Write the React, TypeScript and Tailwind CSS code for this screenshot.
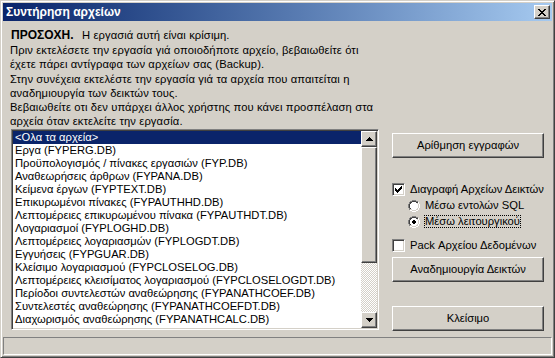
import React from "react";

const files = [
  "<Ολα τα αρχεία>",
  "Εργα (FYPERG.DB)",
  "Προϋπολογισμός / πίνακες εργασιών (FYP.DB)",
  "Αναθεωρήσεις άρθρων (FYPANA.DB)",
  "Κείμενα έργων (FYPTEXT.DB)",
  "Επικυρωμένοι πίνακες (FYPAUTHHD.DB)",
  "Λεπτομέρειες επικυρωμένου πίνακα (FYPAUTHDT.DB)",
  "Λογαριασμοί (FYPLOGHD.DB)",
  "Λεπτομέρειες λογαριασμών (FYPLOGDT.DB)",
  "Εγγυήσεις (FYPGUAR.DB)",
  "Κλείσιμο λογαριασμού (FYPCLOSELOG.DB)",
  "Λεπτομέρειες κλεισίματος λογαριασμού (FYPCLOSELOGDT.DB)",
  "Περίοδοι συντελεστών αναθεώρησης (FYPANATHCOEF.DB)",
  "Συντελεστές αναθεώρησης (FYPANATHCOEFDT.DB)",
  "Διαχωρισμός αναθεώρησης (FYPANATHCALC.DB)",
];

const notes = [
  "Πριν εκτελέσετε την εργασία γιά οποιοδήποτε αρχείο, βεβαιωθείτε ότι",
  "έχετε πάρει αντίγραφα των αρχείων σας (Backup).",
  "Στην συνέχεια εκτελέστε την εργασία γιά τα αρχεία που απαιτείται η",
  "αναδημιουργία των δεικτών τους.",
  "Βεβαιωθείτε οτι δεν υπάρχει άλλος χρήστης που κάνει προσπέλαση στα",
  "αρχεία όταν εκτελείτε την εργασία.",
];

const raised =
  "border border-t-white border-l-white border-b-[#404040] border-r-[#404040] shadow-[inset_-1px_-1px_#808080] bg-[#d4d0c8]";

const Button = ({ label }: { label: string }) => (
  <div className={`${raised} w-[152px] h-[25px] flex items-center justify-center text-black`}>
    {label}
  </div>
);

const CheckBox = ({ checked }: { checked?: boolean }) => (
  <div className="w-[13px] h-[13px] bg-white border border-t-[#808080] border-l-[#808080] border-b-white border-r-white shadow-[inset_1px_1px_#404040,inset_-1px_-1px_#d4d0c8] flex items-center justify-center">
    {checked && (
      <svg width="7" height="7" viewBox="0 0 7 7">
        <path d="M0 2h1v1h1v1h1v-1h1v-1h1v-1h1v-1h1v3h-1v1h-1v1h-1v1h-1v1h-1v-1h-1v-1h-1z" fill="#000" />
      </svg>
    )}
  </div>
);

const Radio = ({ checked }: { checked?: boolean }) => (
  <svg width="12" height="12" viewBox="0 0 12 12" className="shrink-0">
    <path d="M4 0h4v1h2v1h1v2h1v4h-1v2h-1v1h-2v1h-4v-1h-2v-1h-1v-2h-1v-4h1v-2h1v-1h2z" fill="#ffffff" />
    <path d="M4 0h4v1h-4zM2 1h2v1h-2zM8 1h2v1h-2zM1 2h1v2h-1zM0 4h1v4h-1zM1 8h1v2h-1z" fill="#808080" />
    <path d="M4 1h4v1h-4zM2 2h2v1h-2zM8 2h2v1h-2zM2 3h1v1h-1zM1 4h1v4h-1zM2 8h1v1h-1z" fill="#404040" />
    <path d="M10 2h1v2h-1zM11 4h1v4h-1zM10 8h1v2h-1zM8 10h2v1h-2zM4 11h4v1h-4zM2 10h2v1h-2z" fill="#ffffff" />
    <path d="M9 3h1v1h-1zM10 4h1v4h-1zM9 8h1v1h-1zM8 9h2v1h-2zM4 10h4v1h-4zM2 9h2v1h-2z" fill="#d4d0c8" />
    {checked && <path d="M5 4h2v1h1v2h-1v1h-2v-1h-1v-2h1z" fill="#000" />}
  </svg>
);

const Arrow = ({ up }: { up?: boolean }) => (
  <svg width="7" height="4" viewBox="0 0 7 4">
    {up ? (
      <path d="M3 0h1v1h1v1h1v1h1v1h-7v-1h1v-1h1v-1h1z" fill="#000" />
    ) : (
      <path d="M0 0h7v1h-1v1h-1v1h-1v1h-1v-1h-1v-1h-1v-1h-1z" fill="#000" />
    )}
  </svg>
);

export default function App() {
  return (
    <div
      className="w-[555px] h-[358px] bg-[#d4d0c8] flex flex-col p-[2px] border border-t-[#d4d0c8] border-l-[#d4d0c8] border-b-[#404040] border-r-[#404040] shadow-[inset_1px_1px_#ffffff,inset_-1px_-1px_#808080] text-[11.2px] text-black overflow-hidden"
      style={{ fontFamily: '"Liberation Sans", Arial, sans-serif' }}
    >
      {/* title bar */}
      <div className="h-[18px] shrink-0 flex items-center justify-between bg-linear-to-r from-[#0a246a] to-[#a6caf0]">
        <span className="pl-[3px] text-[12px] font-bold text-white leading-none">Συντήρηση αρχείων</span>
        <div className={`${raised} w-[16px] h-[14px] mr-[2px] flex items-center justify-center`}>
          <svg width="8" height="7" viewBox="0 0 8 7">
            <path d="M0 0h2v1h1v1h2v-1h1v-1h2v1h-1v1h-1v1h-1v1h1v1h1v1h1v1h-2v-1h-1v-1h-2v1h-1v1h-2v-1h1v-1h1v-1h1v-1h-1v-1h-1v-1h-1z" fill="#000" />
          </svg>
        </div>
      </div>

      {/* body */}
      <div className="flex-1 flex flex-col">
        <div className="pl-[7px] pt-[7px] whitespace-nowrap">
          <div className="h-[14px] leading-[14px] flex">
            <span className="font-bold text-[12px] pl-[1px] w-[72px]">ΠΡΟΣΟΧΗ.</span>
            <span className="tracking-[0.1px]">Η εργασιά αυτή είναι κρίσιμη.</span>
          </div>
          <div className="mt-[1px] tracking-[0.12px]">
            {notes.map((n) => (
              <div key={n} className="h-[14.3px] leading-[14.3px]">
                {n}
              </div>
            ))}
          </div>
        </div>

        <div className="flex pl-[8px]">
          {/* file list */}
          <div className="w-[368px] h-[201px] bg-white border border-t-[#808080] border-l-[#808080] border-b-white border-r-white shadow-[inset_1px_1px_#404040,inset_-1px_-1px_#d4d0c8] p-[1px] flex">
            <div className="flex-1 flex flex-col whitespace-nowrap overflow-hidden">
              {files.map((f, i) => (
                <div
                  key={f}
                  className={`h-[13px] leading-[13px] pl-[2px] shrink-0 ${i === 0 ? "bg-[#0a246a] text-white" : ""}`}
                >
                  {f}
                </div>
              ))}
            </div>
            <div className="w-[16px] flex flex-col">
              <div className={`${raised} h-[16px] shrink-0 flex items-center justify-center`}>
                <Arrow up />
              </div>
              <div className={`${raised} h-[116px] shrink-0`} />
              <div className="flex-1 bg-[repeating-conic-gradient(#d4d0c8_0_25%,#ffffff_0_50%)] bg-[length:2px_2px]" />
              <div className={`${raised} h-[16px] shrink-0 flex items-center justify-center`}>
                <Arrow />
              </div>
            </div>
          </div>

          {/* right column */}
          <div className="ml-[13px] flex flex-col whitespace-nowrap">
            <div className="mt-[4px]">
              <Button label="Αρίθμηση εγγραφών" />
            </div>
            <div className="mt-[24px] h-[16px] flex items-center gap-[5px]">
              <CheckBox checked />
              <span>Διαγραφή Αρχείων Δεικτών</span>
            </div>
            <div className="h-[16px] flex items-center gap-[5px] pl-[16px]">
              <Radio />
              <span>Μέσω εντολών SQL</span>
            </div>
            <div className="h-[16px] flex items-center gap-[4px] pl-[16px]">
              <Radio checked />
              <span className="px-[1px] outline-1 outline-dotted outline-black -outline-offset-1 leading-[13px]">
                Μέσω λειτουργικού
              </span>
            </div>
            <div className="mt-[8px] h-[16px] flex items-center gap-[5px]">
              <CheckBox />
              <span>Pack Αρχείου Δεδομένων</span>
            </div>
            <div className="mt-[3px]">
              <Button label="Αναδημιουργία Δεικτών" />
            </div>
            <div className="mt-[24px]">
              <Button label="Κλείσιμο" />
            </div>
          </div>
        </div>
      </div>

      {/* status bar */}
      <div className="h-[18px] shrink-0 border border-t-[#808080] border-l-[#808080] border-b-white border-r-white" />
    </div>
  );
}
